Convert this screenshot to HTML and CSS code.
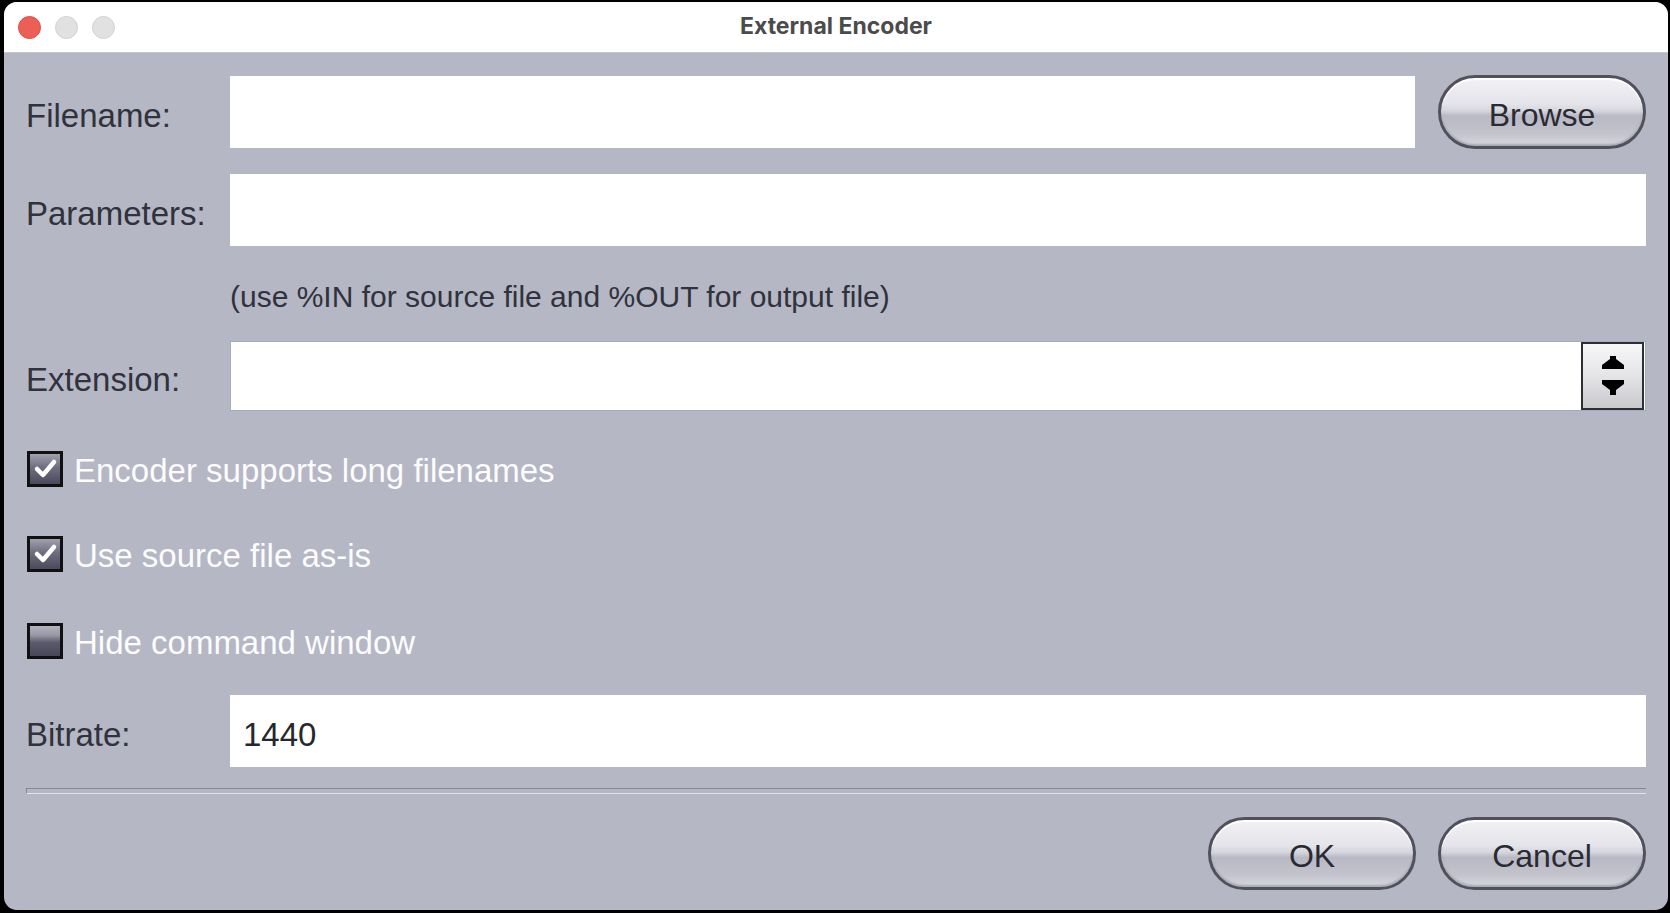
FILE: index.html
```html
<!DOCTYPE html>
<html lang="en">
<head>
    <meta charset="UTF-8">
    <title>External Encoder</title>
    <link rel="stylesheet" href="styles.css">
</head>
<body>

    <div class="window">
        <!-- Title bar -->
        <div class="titlebar">
            <div class="lights">
                <span class="light close"></span>
                <span class="light"></span>
                <span class="light"></span>
            </div>
            <div class="title">External Encoder</div>
            <div></div>
        </div>

        <!-- Dialog content -->
        <div class="content">
            <div class="row row-filename">
                <label class="label">Filename:</label>
                <div class="field"></div>
                <button class="pill browse">Browse</button>
            </div>

            <div class="row row-params">
                <label class="label">Parameters:</label>
                <div class="field"></div>
            </div>

            <div class="hint">(use %IN for source file and %OUT for output file)</div>

            <div class="row row-ext">
                <label class="label">Extension:</label>
                <div class="field combo">
                    <div class="spinner">
                        <svg width="24" height="40" viewBox="0 0 24 40">
                            <polygon points="9,0 15,0 15,3 23,9 23,13 1,13 1,9 9,3" fill="#000"/>
                            <polygon points="1,24 23,24 23,28 15,34 15,39 9,39 9,34 1,28" fill="#000"/>
                        </svg>
                    </div>
                </div>
            </div>

            <div class="check check-first">
                <span class="box checked">
                    <svg width="30" height="30" viewBox="0 0 30 30"><path d="M7 15 l6 6 l11 -13" fill="none" stroke="#fff" stroke-width="4.5" stroke-linecap="round" stroke-linejoin="round"/></svg>
                </span>
                <span class="check-text">Encoder supports long filenames</span>
            </div>

            <div class="check check-second">
                <span class="box checked">
                    <svg width="30" height="30" viewBox="0 0 30 30"><path d="M7 15 l6 6 l11 -13" fill="none" stroke="#fff" stroke-width="4.5" stroke-linecap="round" stroke-linejoin="round"/></svg>
                </span>
                <span class="check-text">Use source file as-is</span>
            </div>

            <div class="check check-third">
                <span class="box"></span>
                <span class="check-text">Hide command window</span>
            </div>

            <div class="row row-bitrate">
                <label class="label">Bitrate:</label>
                <div class="field value">1440</div>
            </div>

            <div class="separator"></div>

            <div class="actions">
                <button class="pill">OK</button>
                <button class="pill">Cancel</button>
            </div>
        </div>
    </div>

</body>
</html>
```

FILE: styles.css
```css
html, body {
    margin: 0;
    padding: 0;
}
body {
    background-color: #000;
    padding: 2px 2px 3px 4px;
    height: 913px;
    box-sizing: border-box;
    font-family: "Liberation Sans", Arial, sans-serif;
}
.window {
    height: 100%;
    background-color: #b5b7c5;
    border-radius: 13px;
    overflow: hidden;
    display: flex;
    flex-direction: column;
}
.titlebar {
    height: 52px;
    background-color: #fff;
    border-bottom: 1px solid #c4c5cc;
    display: grid;
    grid-template-columns: 1fr auto 1fr;
    align-items: center;
}
.lights {
    display: flex;
    gap: 14px;
    padding-left: 14px;
}
.light {
    width: 21px;
    height: 21px;
    border-radius: 50%;
    background-color: #e1e1e1;
    border: 1px solid #d2d2d2;
}
.light.close {
    background-color: #ed5e57;
    border-color: #dc4c45;
}
.title {
    font-family: Inter, "Liberation Sans", sans-serif;
    font-weight: 700;
    font-size: 23px;
    color: #4b4b4b;
    padding-bottom: 2px;
}
.content {
    padding: 22px 22px 20px 22px;
    display: flex;
    flex-direction: column;
}
.row {
    display: flex;
    align-items: center;
}
.label {
    width: 204px;
    flex-shrink: 0;
    font-size: 33px;
    color: #30323c;
    padding-top: 8px;
}
.field {
    flex: 1;
    height: 72px;
    background-color: #fff;
    box-sizing: border-box;
}
.row-params {
    margin-top: 25px;
}
.hint {
    margin-top: 33px;
    margin-left: 204px;
    height: 36px;
    line-height: 36px;
    font-size: 30px;
    color: #30323c;
}
.row-ext {
    margin-top: 26px;
}
.field.combo {
    height: 70px;
    border: 1px solid #a3adc0;
    display: flex;
    justify-content: flex-end;
    align-items: center;
    padding-right: 1px;
}
.spinner {
    width: 59px;
    height: 64px;
    border: 2px solid #2e2f33;
    background: linear-gradient(to bottom, #f7f7f8 0%, #e4e4e7 50%, #c9c9ce 100%);
    display: flex;
    align-items: center;
    justify-content: center;
}
.check {
    display: flex;
    align-items: center;
    height: 36px;
    margin-left: 1px;
}
.check-first {
    margin-top: 40px;
}
.check-second {
    margin-top: 49px;
}
.check-third {
    margin-top: 51px;
}
.box {
    width: 36px;
    height: 36px;
    box-sizing: border-box;
    border: 3px solid #111;
    background: linear-gradient(to bottom, #b4b4bf 0%, #9898a6 30%, #5a5a6c 55%, #474758 100%);
    display: flex;
    align-items: center;
    justify-content: center;
}
.box.checked {
    background: linear-gradient(to bottom, #a0a0ae 0%, #6e6e80 45%, #4a4a5c 100%);
}
.check-text {
    margin-left: 11px;
    font-size: 33px;
    color: #fcfcfc;
    padding-top: 4px;
}
.row-bitrate {
    margin-top: 36px;
}
.field.value {
    font-size: 33px;
    color: #26272d;
    padding-left: 13px;
    padding-top: 8px;
    display: flex;
    align-items: center;
}
.separator {
    margin-top: 21px;
    height: 4px;
    border-top: 1px solid #858794;
    border-bottom: 1px solid #e2e3ea;
    border-left: 1px solid #858794;
}
.actions {
    margin-top: 23px;
    display: flex;
    justify-content: flex-end;
    gap: 22px;
}
.pill {
    width: 208px;
    height: 73px;
    border: 3px solid #50515a;
    border-radius: 37px;
    background: linear-gradient(to bottom, #f2f2f5 0%, #e4e4ea 38%, #d6d6de 48%, #b9b9c5 56%, #c3c3cd 82%, #d8d8e0 100%);
    box-shadow: inset 0 2px 1px #ffffff, inset 0 -2px 2px #a9a9b5;
    font-family: "Liberation Sans", Arial, sans-serif;
    font-size: 32px;
    color: #2a2b32;
    padding: 6px 0 0 0;
    cursor: pointer;
}
.browse {
    margin-left: 23px;
    height: 74px;
}
```
